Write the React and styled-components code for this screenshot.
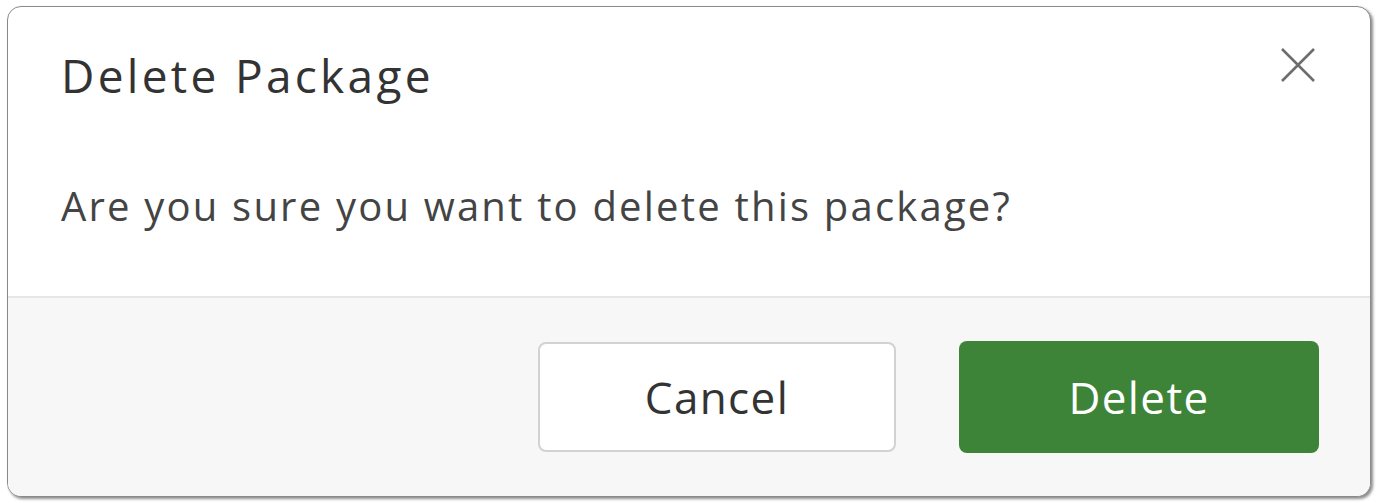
import styled, { createGlobalStyle } from 'styled-components'

const GlobalStyle = createGlobalStyle`
    html, body {
        margin: 0;
        background: #ffffff;
        font-family: "Open Sans", "Liberation Sans", sans-serif;
    }
`
const Page = styled.div`
    padding: 6px 8px 6px 7px;
`
const Dialog = styled.div`
    height: 491px;
    box-sizing: border-box;
    display: flex;
    flex-direction: column;
    background: #fff;
    border: 1px solid #8a8a8a;
    border-radius: 14px;
    box-shadow: 2px 2px 3px rgba(0, 0, 0, 0.45);
    overflow: hidden;
`
const Header = styled.div`
    display: flex;
    justify-content: space-between;
    align-items: flex-start;
    padding: 37px 52px 0 53px;
`
const Title = styled.h2`
    margin: 0;
    font-size: 46px;
    font-weight: 400;
    letter-spacing: 3.3px;
    color: #333;
    line-height: 62px;
`
const CloseBtn = styled.button`
    border: none;
    background: none;
    padding: 0;
    margin-top: 1px;
    width: 40px;
    height: 40px;
    display: flex;
    align-items: center;
    justify-content: center;
    cursor: pointer;
`
const Body = styled.div`
    flex: 1;
    padding: 9px 54px 0 53px;
    display: flex;
    align-items: center;
    font-size: 40px;
    letter-spacing: 2.2px;
    color: #444;
`
const Footer = styled.div`
    height: 200px;
    box-sizing: border-box;
    background: #f7f7f7;
    border-top: 2px solid #e6e6e6;
    display: flex;
    justify-content: flex-end;
    align-items: center;
    gap: 63px;
    padding: 0 51px 0 0;
`
const Button = styled.button`
    width: ${p => (p.$primary ? '360px' : '358px')};
    height: ${p => (p.$primary ? '112px' : '110px')};
    box-sizing: border-box;
    border-radius: 8px;
    font-family: inherit;
    font-size: 44px;
    letter-spacing: 1.4px;
    cursor: pointer;
    border: ${p => (p.$primary ? 'none' : '2px solid #d2d2d2')};
    background: ${p => (p.$primary ? '#3d8439' : '#fff')};
    color: ${p => (p.$primary ? '#fff' : '#333')};
`

export default function App() {
    return (
        <>
            <GlobalStyle />
            <Page>
                <Dialog>
                    <Header>
                        <Title>Delete Package</Title>
                        <CloseBtn aria-label='Close'>
                            <svg width='36' height='36' viewBox='0 0 36 36'>
                                <path d='M2 2 L34 34 M34 2 L2 34' stroke='#6d6d6d' strokeWidth='2.6' />
                            </svg>
                        </CloseBtn>
                    </Header>
                    <Body>Are you sure you want to delete this package?</Body>
                    <Footer>
                        <Button>Cancel</Button>
                        <Button $primary>Delete</Button>
                    </Footer>
                </Dialog>
            </Page>
        </>
    )
}
